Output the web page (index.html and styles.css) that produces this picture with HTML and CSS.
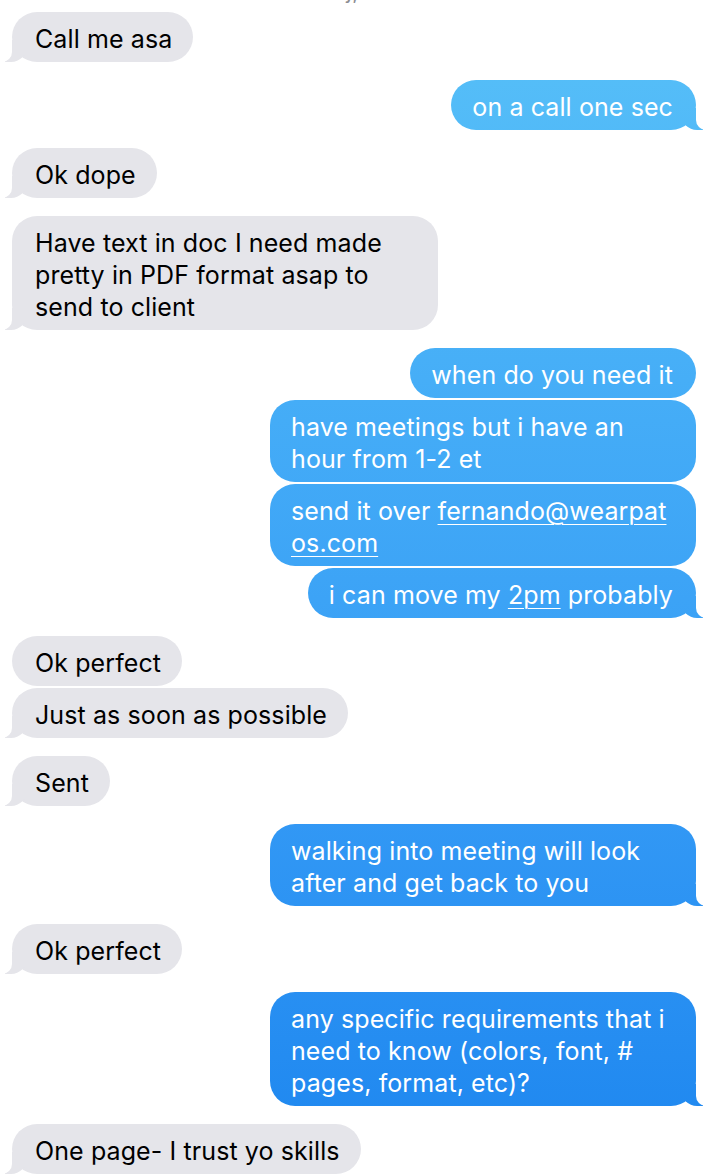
FILE: index.html
```html
<!DOCTYPE html>
<html lang="en">
<head>
<meta charset="utf-8">
<title>Messages</title>
<link rel="stylesheet" href="styles.css">
</head>
<body>
<div class="thread">
  <div class="stamp"><b>Yesterday,</b> <span class="time">10:05 AM</span></div>

  <div class="group them">
    <div class="msg tail">Call me asa</div>
  </div>

  <div class="group me">
    <div class="msg tail">on a call one sec</div>
  </div>

  <div class="group them">
    <div class="msg tail">Ok dope</div>
  </div>

  <div class="group them">
    <div class="msg tail">Have text in doc I need made pretty in PDF format asap to send to client</div>
  </div>

  <div class="group me">
    <div class="msg">when do you need it</div>
    <div class="msg">have meetings but i have an hour from 1-2 et</div>
    <div class="msg">send it over <span class="link brk">fernando@wearpatos.com</span></div>
    <div class="msg tail">i can move my <span class="link">2pm</span> probably</div>
  </div>

  <div class="group them">
    <div class="msg">Ok perfect</div>
    <div class="msg tail">Just as soon as possible</div>
  </div>

  <div class="group them">
    <div class="msg tail">Sent</div>
  </div>

  <div class="group me">
    <div class="msg tail">walking into meeting will look after and get back to you</div>
  </div>

  <div class="group them">
    <div class="msg tail">Ok perfect</div>
  </div>

  <div class="group me">
    <div class="msg tail">any specific requirements that i need to know (colors, font, # pages, format, etc)?</div>
  </div>

  <div class="group them">
    <div class="msg tail">One page- I trust yo skills</div>
  </div>
</div>
</body>
</html>
```

FILE: styles.css
```css
html, body {
  margin: 0;
  padding: 0;
  background: #ffffff;
}

body {
  font-family: "Inter", "Noto Sans", sans-serif;
  font-size: 25px;
  line-height: 32px;
  letter-spacing: 0.1px;
  color: #000000;
  overflow: hidden;
}

.thread {
  display: flex;
  flex-direction: column;
  padding: 0 8px 0 12px;
}

.stamp {
  height: 16px;
  line-height: 16px;
  margin-top: -13px;
  font-size: 14px;
  letter-spacing: 0;
  color: #8e8e93;
  text-align: center;
}

.stamp .time {
  color: #c7c7cc;
}

.group {
  display: flex;
  flex-direction: column;
  gap: 2px;
  margin-top: 18px;
}

.stamp + .group {
  margin-top: 9px;
}

.them {
  align-items: flex-start;
}

.me {
  align-items: flex-end;
}

.msg {
  position: relative;
  isolation: isolate;
  max-width: 426px;
  box-sizing: border-box;
  padding: 11px 21px 7px 23px;
  border-radius: 25px;
}

.them .msg {
  background: #e5e5ea;
  color: #000000;
}

.me .msg {
  padding: 11px 23px 7px 21px;
  color: #ffffff;
  background: linear-gradient(180deg, #58c1f8 0px, #45adf7 400px, #3399f5 800px, #1d86ef 1176px);
  background-attachment: fixed;
}

.link {
  text-decoration: underline;
  text-decoration-thickness: 1px;
  text-underline-offset: 4px;
}

.brk {
  word-break: break-all;
}

/* bubble tails */
.msg.tail::before,
.msg.tail::after {
  content: "";
  position: absolute;
  bottom: 0;
  height: 22px;
}

.them .msg.tail::before {
  left: -7px;
  width: 22px;
  background: #e5e5ea;
  border-bottom-right-radius: 16px;
  z-index: -1;
}

.them .msg.tail::after {
  left: -12px;
  width: 12px;
  background: #ffffff;
  border-bottom-right-radius: 10px;
}

.me .msg.tail::before {
  right: -7px;
  width: 22px;
  background: linear-gradient(180deg, #58c1f8 0px, #45adf7 400px, #3399f5 800px, #1d86ef 1176px);
  background-attachment: fixed;
  border-bottom-left-radius: 16px;
  z-index: -1;
}

.me .msg.tail::after {
  right: -12px;
  width: 12px;
  background: #ffffff;
  border-bottom-left-radius: 10px;
}
```
